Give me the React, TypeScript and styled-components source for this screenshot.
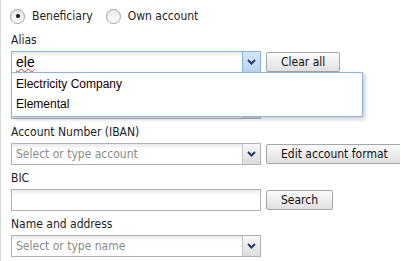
import styled, { createGlobalStyle, css } from 'styled-components';

const GlobalStyle = createGlobalStyle`
    html, body {
        margin: 0;
        padding: 0;
        background: #fff;
    }
    body {
        font-family: "DejaVu Sans Condensed", "DejaVu Sans", sans-serif;
        font-size: 11px;
        color: #1a1a1a;
    }
`;

const Page = styled.div`
    width: 400px;
    height: 261px;
    border-left: 1px solid #d9d9d9;
    padding-left: 10px;
    box-sizing: border-box;
    overflow: hidden;
`;

const RadioRow = styled.div`
    display: flex;
    align-items: center;
    height: 32px;
    margin-left: -1px;
`;

const RadioOption = styled.label`
    display: flex;
    align-items: center;
    gap: 7px;
    margin-right: 13px;
    font-size: 12px;
    color: #222;
`;

const RadioCircle = styled.span<{ $checked?: boolean }>`
    width: 13px;
    height: 13px;
    border-radius: 50%;
    border: 1px solid #a3a3a3;
    background: linear-gradient(#e8e8e8, #fdfdfd);
    display: flex;
    align-items: center;
    justify-content: center;
    &::after {
        content: '';
        width: 4px;
        height: 4px;
        border-radius: 50%;
        background: ${p => (p.$checked ? '#111' : 'transparent')};
    }
`;

const Field = styled.div`
    margin-bottom: 5px;
`;

const Label = styled.div`
    height: 16px;
    line-height: 16px;
    font-size: 12px;
    color: #1c1c1c;
    margin-bottom: 3px;
`;

const Row = styled.div`
    display: flex;
    align-items: center;
    gap: 5px;
`;

const Combo = styled.div<{ $focused?: boolean }>`
    position: relative;
    display: flex;
    flex-shrink: 0;
    width: 250px;
    height: 22px;
    box-sizing: border-box;
    border: 1px solid ${p => (p.$focused ? '#86b4e4' : '#abb2bc')};
    background: linear-gradient(#e9e9e9 0, #fff 5px);
`;

const ComboText = styled.div<{ $placeholder?: boolean }>`
    flex: 1;
    padding-left: 4px;
    line-height: 20px;
    font-size: 12px;
    white-space: nowrap;
    overflow: hidden;
    ${p => p.$placeholder && css`
        color: #8a8a8a;
    `}
`;

const TypedText = styled.span`
    font-family: "Liberation Sans", Arial, sans-serif;
    font-size: 14px;
    color: #000;
    text-decoration: underline wavy #e03030;
    text-decoration-thickness: 1px;
    text-underline-offset: 1px;
`;

const ArrowButton = styled.div<{ $focused?: boolean }>`
    width: 17px;
    display: flex;
    align-items: center;
    justify-content: center;
    border-left: 1px solid ${p => (p.$focused ? '#86b4e4' : '#c4c8ce')};
    background: ${p => (p.$focused
        ? 'linear-gradient(#d6e5f6, #bcd3ee)'
        : 'linear-gradient(#f7f7f7, #dcdcdc)')};
`;

const TextBox = styled.div`
    flex-shrink: 0;
    width: 250px;
    height: 22px;
    box-sizing: border-box;
    border: 1px solid #abb2bc;
    background: linear-gradient(#e9e9e9 0, #fff 5px);
`;

const Button = styled.button`
    flex-shrink: 0;
    height: 20px;
    padding: 0 14px;
    border: 1px solid #a6a6a6;
    border-radius: 2px;
    background: linear-gradient(#fbfbfb, #e0e0e0);
    font-family: "DejaVu Sans Condensed", "DejaVu Sans", sans-serif;
    font-size: 12px;
    color: #111;
    white-space: nowrap;
`;

const Dropdown = styled.div`
    position: absolute;
    top: 20px;
    left: -1px;
    width: 350px;
    z-index: 10;
    background: #fff;
    border: 1px solid #8cb6e2;
    box-shadow: 2px 2px 4px rgba(0, 0, 0, 0.22);
    padding: 1px 0 2px;
`;

const Option = styled.div`
    height: 20px;
    line-height: 20px;
    padding-left: 4px;
    font-family: "Liberation Sans", Arial, sans-serif;
    font-size: 12px;
    color: #140000;
`;

const Chevron = () => (
    <svg width="9" height="6" viewBox="0 0 9 6">
        <path d="M1 1 L4.5 4.5 L8 1" fill="none" stroke="#203f72" strokeWidth="2" />
    </svg>
);

type ComboProps = {
    placeholder?: string,
    focused?: boolean,
    value?: string,
    options?: string[],
}

const ComboBox = ({ placeholder, focused, value, options }: ComboProps) => (
    <Combo $focused={focused}>
        <ComboText $placeholder={!value}>
            {value ? <TypedText>{value}</TypedText> : placeholder}
        </ComboText>
        <ArrowButton $focused={focused}>
            <Chevron />
        </ArrowButton>
        {options && (
            <Dropdown>
                {options.map(o => <Option key={o}>{o}</Option>)}
            </Dropdown>
        )}
    </Combo>
);

export default function App() {
    return (
        <>
            <GlobalStyle />
            <Page>
                <RadioRow>
                    <RadioOption><RadioCircle $checked />Beneficiary</RadioOption>
                    <RadioOption><RadioCircle />Own account</RadioOption>
                </RadioRow>
                <Field>
                    <Label>Alias</Label>
                    <Row>
                        <ComboBox focused value="ele" options={['Electricity Company', 'Elemental']} />
                        <Button>Clear all</Button>
                    </Row>
                </Field>
                <Field>
                    {/* label of this field is hidden under the open list */}
                    <Label />
                    <Row>
                        <ComboBox />
                    </Row>
                </Field>
                <Field>
                    <Label>Account Number (IBAN)</Label>
                    <Row>
                        <ComboBox placeholder="Select or type account" />
                        <Button>Edit account format</Button>
                    </Row>
                </Field>
                <Field>
                    <Label>BIC</Label>
                    <Row>
                        <TextBox />
                        <Button>Search</Button>
                    </Row>
                </Field>
                <Field>
                    <Label>Name and address</Label>
                    <Row>
                        <ComboBox placeholder="Select or type name" />
                    </Row>
                </Field>
            </Page>
        </>
    );
}
